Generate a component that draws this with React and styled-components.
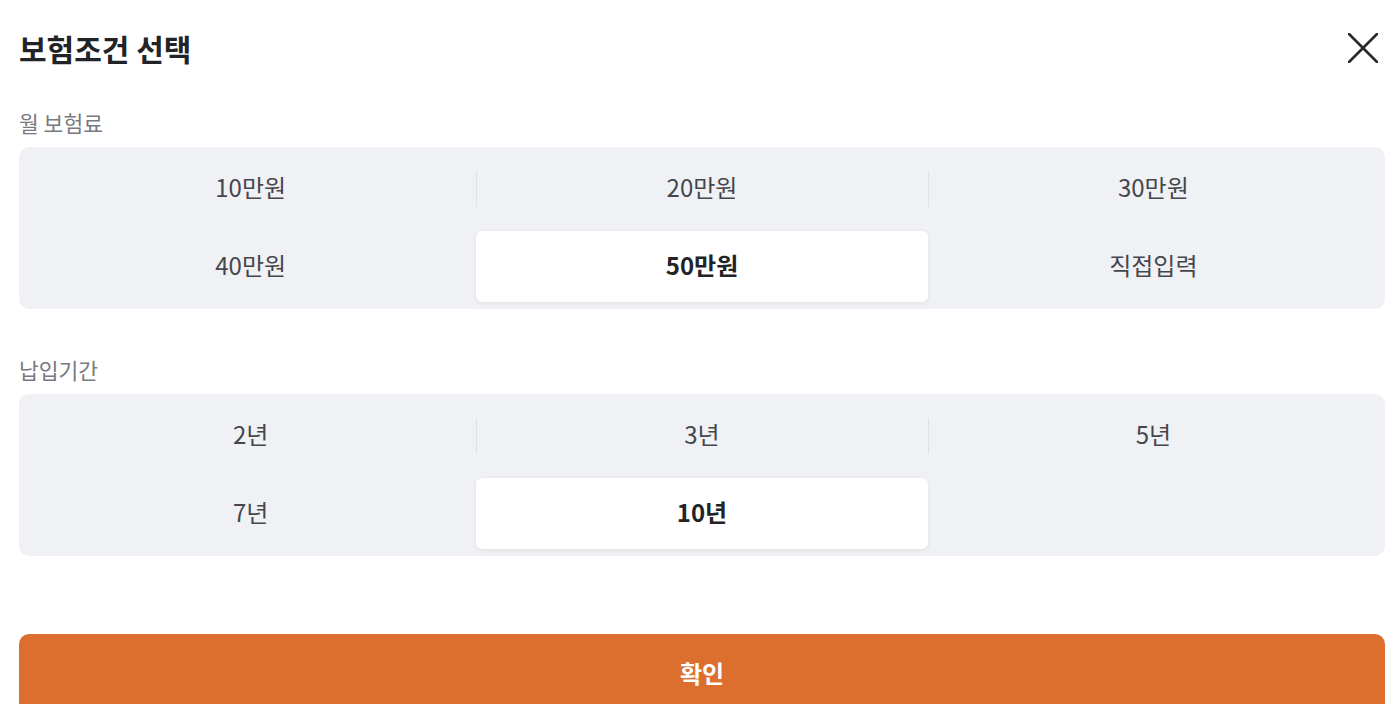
import React, { useState } from 'react';
import styled, { createGlobalStyle } from 'styled-components';

const GlobalStyle = createGlobalStyle`
    * { box-sizing: border-box; }
    body {
        margin: 0;
        background: #ffffff;
        font-family: "Noto Sans CJK KR", "Noto Sans", sans-serif;
    }
`;

const Sheet = styled.div`
    padding: 0 5px 0 19px;
    height: 704px;
    overflow: hidden;
`;

const Header = styled.div`
    display: flex;
    align-items: center;
    justify-content: space-between;
    height: 96px;
`;

const Title = styled.h1`
    margin: 0;
    font-size: 30px;
    font-weight: 700;
    color: #222326;
    line-height: 1;
`;

const CloseButton = styled.button`
    display: flex;
    border: none;
    background: none;
    padding: 0;
    margin-right: 7px;
    cursor: pointer;
`;

const Label = styled.div`
    margin-top: ${p => p.top}px;
    margin-bottom: 10px;
    font-size: 21.5px;
    line-height: 28px;
    color: #777a80;
`;

const Panel = styled.div`
    display: grid;
    grid-template-columns: repeat(3, 1fr);
    grid-auto-rows: 71px;
    row-gap: 7px;
    padding: 6px 6px 7px;
    background: #f0f1f5;
    border-radius: 10px;
`;

const Option = styled.button`
    position: relative;
    border: none;
    border-radius: 6px;
    padding: 0 0 4px;
    background: ${p => (p.active ? '#ffffff' : 'transparent')};
    box-shadow: ${p => (p.active ? '0 1px 4px rgba(0, 0, 0, 0.08)' : 'none')};
    font-family: inherit;
    font-size: 24px;
    font-weight: ${p => (p.active ? 700 : 400)};
    color: ${p => (p.active ? '#222326' : '#45474d')};
    cursor: pointer;

    &::before {
        content: '';
        display: ${p => (p.divider ? 'block' : 'none')};
        position: absolute;
        left: 0;
        top: 18px;
        width: 1px;
        height: 36px;
        background: #dfe0e5;
    }
`;

const ConfirmButton = styled.button`
    display: block;
    width: 100%;
    height: 78px;
    margin-top: 78px;
    padding: 0 0 2px;
    border: none;
    border-radius: 10px;
    background: #dc6f2e;
    color: #ffffff;
    font-family: inherit;
    font-size: 24px;
    font-weight: 700;
    cursor: pointer;
`;

const premiums = ['10만원', '20만원', '30만원', '40만원', '50만원', '직접입력'];
const periods = ['2년', '3년', '5년', '7년', '10년'];

const OptionGroup = ({ items, value, onSelect }) => {
    const activeIndex = items.indexOf(value);
    return (
        <Panel>
            {items.map((item, i) => {
                // divider only between neighbours in the first row that are both unselected
                const showDivider = i % 3 !== 0 && i !== activeIndex && i - 1 !== activeIndex;
                return (
                    <Option
                        key={item}
                        active={i === activeIndex}
                        divider={showDivider && i < 3}
                        onClick={() => onSelect(item)}
                    >
                        {item}
                    </Option>
                );
            })}
        </Panel>
    );
};

const App = () => {
    const [premium, setPremium] = useState('50만원');
    const [period, setPeriod] = useState('10년');

    return (
        <Sheet>
            <GlobalStyle />
            <Header>
                <Title>보험조건 선택</Title>
                <CloseButton aria-label="닫기">
                    <svg width="30" height="30" viewBox="0 0 30 30">
                        <path d="M1 1 L29 29 M29 1 L1 29" stroke="#26282c" strokeWidth="2.6" strokeLinecap="round" />
                    </svg>
                </CloseButton>
            </Header>

            <Label top={13}>월 보험료</Label>
            <OptionGroup items={premiums} value={premium} onSelect={setPremium} />

            <Label top={47}>납입기간</Label>
            <OptionGroup items={periods} value={period} onSelect={setPeriod} />

            <ConfirmButton>확인</ConfirmButton>
        </Sheet>
    );
};

export default App;
